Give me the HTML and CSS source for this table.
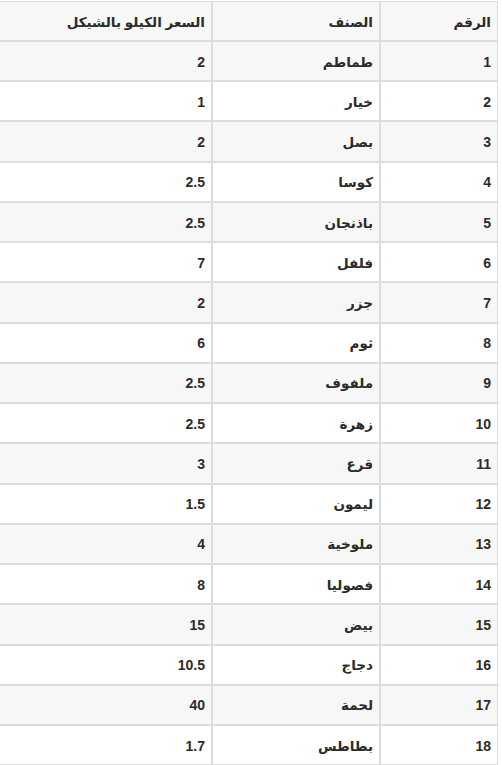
FILE: index.html
```html
<!DOCTYPE html>
<html lang="ar" dir="rtl">
<head>
<meta charset="utf-8">
<title>أسعار الخضار</title>
<link rel="stylesheet" href="styles.css">
</head>
<body>
<div class="wrap">
<table class="prices">
<thead>
<tr><th class="c-num">الرقم</th><th class="c-name">الصنف</th><th class="c-price">السعر الكيلو بالشيكل</th></tr>
</thead>
<tbody>
<tr><td class="n">1</td><td>طماطم</td><td class="n">2</td></tr>
<tr><td class="n">2</td><td>خيار</td><td class="n">1</td></tr>
<tr><td class="n">3</td><td>بصل</td><td class="n">2</td></tr>
<tr><td class="n">4</td><td>كوسا</td><td class="n">2.5</td></tr>
<tr><td class="n">5</td><td>باذنجان</td><td class="n">2.5</td></tr>
<tr><td class="n">6</td><td>فلفل</td><td class="n">7</td></tr>
<tr><td class="n">7</td><td>جزر</td><td class="n">2</td></tr>
<tr><td class="n">8</td><td>ثوم</td><td class="n">6</td></tr>
<tr><td class="n">9</td><td>ملفوف</td><td class="n">2.5</td></tr>
<tr><td class="n">10</td><td>زهرة</td><td class="n">2.5</td></tr>
<tr><td class="n">11</td><td>قرع</td><td class="n">3</td></tr>
<tr><td class="n">12</td><td>ليمون</td><td class="n">1.5</td></tr>
<tr><td class="n">13</td><td>ملوخية</td><td class="n">4</td></tr>
<tr><td class="n">14</td><td>فصوليا</td><td class="n">8</td></tr>
<tr><td class="n">15</td><td>بيض</td><td class="n">15</td></tr>
<tr><td class="n">16</td><td>دجاج</td><td class="n">10.5</td></tr>
<tr><td class="n">17</td><td>لحمة</td><td class="n">40</td></tr>
<tr><td class="n">18</td><td>بطاطس</td><td class="n">1.7</td></tr>
</tbody>
</table>
</div>
</body>
</html>
```
FILE: styles.css
```css
html, body {
  margin: 0;
  padding: 0;
  background: #ffffff;
}
body {
  direction: rtl;
  font-family: "Liberation Sans", "DejaVu Sans", sans-serif;
  font-size: 13.5px;
  font-weight: bold;
  color: #2b2b2b;
  overflow: hidden;
}
.wrap {
  width: 502px;
  height: 765px;
  overflow: hidden;
}
.prices {
  border-collapse: separate;
  border-spacing: 0;
  table-layout: fixed;
  width: 510px;
  margin-top: 1px;
  margin-right: 4px;
  border-top: 1px solid #dddddd;
  border-right: 1px solid #dddddd;
}
.prices th, .prices td {
  box-sizing: border-box;
  padding: 0 6px 0 4px;
  text-align: right;
  vertical-align: middle;
  border-bottom: 2px solid #dddddd;
  font-weight: bold;
  white-space: nowrap;
}
.prices th:not(:last-child), .prices td:not(:last-child) {
  border-left: 2px solid #dddddd;
}
.prices th {
  height: 40px;
  padding-top: 1px;
}
.prices td {
  height: 40.24px;
  padding-top: 1px;
}
.prices td.n {
  font-size: 14px;
}
.c-num { width: 118px; }
.c-name { width: 168px; }
.c-price { width: auto; }
.prices thead tr,
.prices tbody tr:nth-child(odd) {
  background: #f7f7f7;
}
.prices tbody tr:nth-child(even) {
  background: #ffffff;
}
```
